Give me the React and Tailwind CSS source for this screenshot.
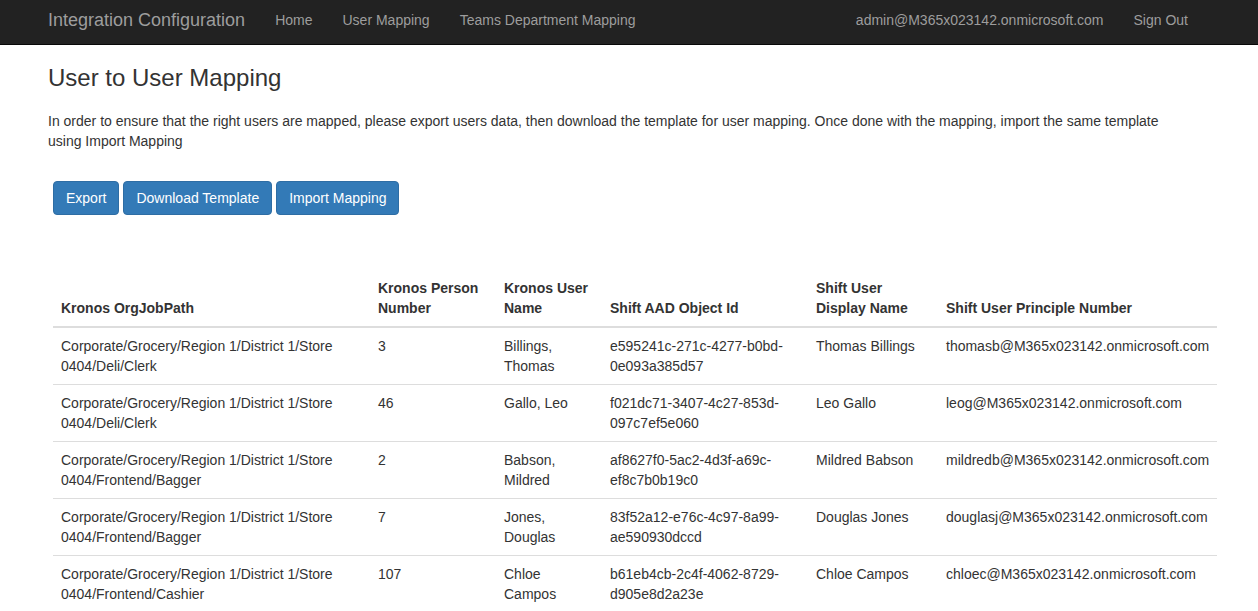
import React from "react";

const rows = [
  {
    path: "Corporate/Grocery/Region 1/District 1/Store 0404/Deli/Clerk",
    num: "3",
    name: "Billings, Thomas",
    aad: "e595241c-271c-4277-b0bd-0e093a385d57",
    display: "Thomas Billings",
    upn: "thomasb@M365x023142.onmicrosoft.com",
  },
  {
    path: "Corporate/Grocery/Region 1/District 1/Store 0404/Deli/Clerk",
    num: "46",
    name: "Gallo, Leo",
    aad: "f021dc71-3407-4c27-853d-097c7ef5e060",
    display: "Leo Gallo",
    upn: "leog@M365x023142.onmicrosoft.com",
  },
  {
    path: "Corporate/Grocery/Region 1/District 1/Store 0404/Frontend/Bagger",
    num: "2",
    name: "Babson, Mildred",
    aad: "af8627f0-5ac2-4d3f-a69c-ef8c7b0b19c0",
    display: "Mildred Babson",
    upn: "mildredb@M365x023142.onmicrosoft.com",
  },
  {
    path: "Corporate/Grocery/Region 1/District 1/Store 0404/Frontend/Bagger",
    num: "7",
    name: "Jones, Douglas",
    aad: "83f52a12-e76c-4c97-8a99-ae590930dccd",
    display: "Douglas Jones",
    upn: "douglasj@M365x023142.onmicrosoft.com",
  },
  {
    path: "Corporate/Grocery/Region 1/District 1/Store 0404/Frontend/Cashier",
    num: "107",
    name: "Chloe Campos",
    aad: "b61eb4cb-2c4f-4062-8729-d905e8d2a23e",
    display: "Chloe Campos",
    upn: "chloec@M365x023142.onmicrosoft.com",
  },
];

const App = () => {
  return (
    <div className="min-h-screen bg-white text-[14px] leading-[20px] text-[#333] font-['Liberation_Sans',Arial,sans-serif]">
      {/* navbar */}
      <nav className="h-[45px] bg-[#222] border-b border-[#080808] flex items-start pl-[48px] pr-[55px] text-[#9d9d9d]">
        <a className="text-[18px] leading-[20px] pt-[10px] mr-[15px]">Integration Configuration</a>
        <a className="pt-[10px] px-[15px]">Home</a>
        <a className="pt-[10px] px-[15px]">User Mapping</a>
        <a className="pt-[10px] px-[15px]">Teams Department Mapping</a>
        <div className="ml-auto flex">
          <a className="pt-[10px] px-[15px]">admin@M365x023142.onmicrosoft.com</a>
          <a className="pt-[10px] px-[15px]">Sign Out</a>
        </div>
      </nav>

      <div className="pl-[48px] pr-[48px]">
        <h3 className="text-[24px] leading-[26px] font-normal mt-[20px]">User to User Mapping</h3>
        <p className="mt-[20px] max-w-[1140px]">
          In order to ensure that the right users are mapped, please export users data, then download the template for user mapping. Once done with the mapping, import the same template using Import Mapping
        </p>

        <div className="mt-[30px] ml-[5px] flex gap-[4px]">
          <button className="h-[34px] px-[12px] bg-[#337ab7] border border-[#2e6da4] rounded-[4px] text-white">Export</button>
          <button className="h-[34px] px-[12px] bg-[#337ab7] border border-[#2e6da4] rounded-[4px] text-white">Download Template</button>
          <button className="h-[34px] px-[12px] bg-[#337ab7] border border-[#2e6da4] rounded-[4px] text-white">Import Mapping</button>
        </div>

        <table className="mt-[55px] ml-[5px] w-[1164px] table-fixed border-collapse">
          <thead>
            <tr className="border-b-2 border-[#ddd] text-left align-bottom">
              <th className="w-[317px] p-[8px] font-bold">Kronos OrgJobPath</th>
              <th className="w-[126px] p-[8px] font-bold">Kronos Person Number</th>
              <th className="w-[106px] p-[8px] font-bold">Kronos User Name</th>
              <th className="w-[206px] p-[8px] font-bold">Shift AAD Object Id</th>
              <th className="w-[130px] p-[8px] font-bold">Shift User Display Name</th>
              <th className="p-[8px] font-bold">Shift User Principle Number</th>
            </tr>
          </thead>
          <tbody>
            {rows.map((r, i) => (
              <tr key={i} className="border-b border-[#ddd] align-top">
                <td className="p-[8px]">{r.path}</td>
                <td className="p-[8px]">{r.num}</td>
                <td className="p-[8px]">{r.name}</td>
                <td className="p-[8px]">{r.aad}</td>
                <td className="p-[8px]">{r.display}</td>
                <td className="p-[8px]">{r.upn}</td>
              </tr>
            ))}
          </tbody>
        </table>
      </div>
    </div>
  );
};

export default App;
